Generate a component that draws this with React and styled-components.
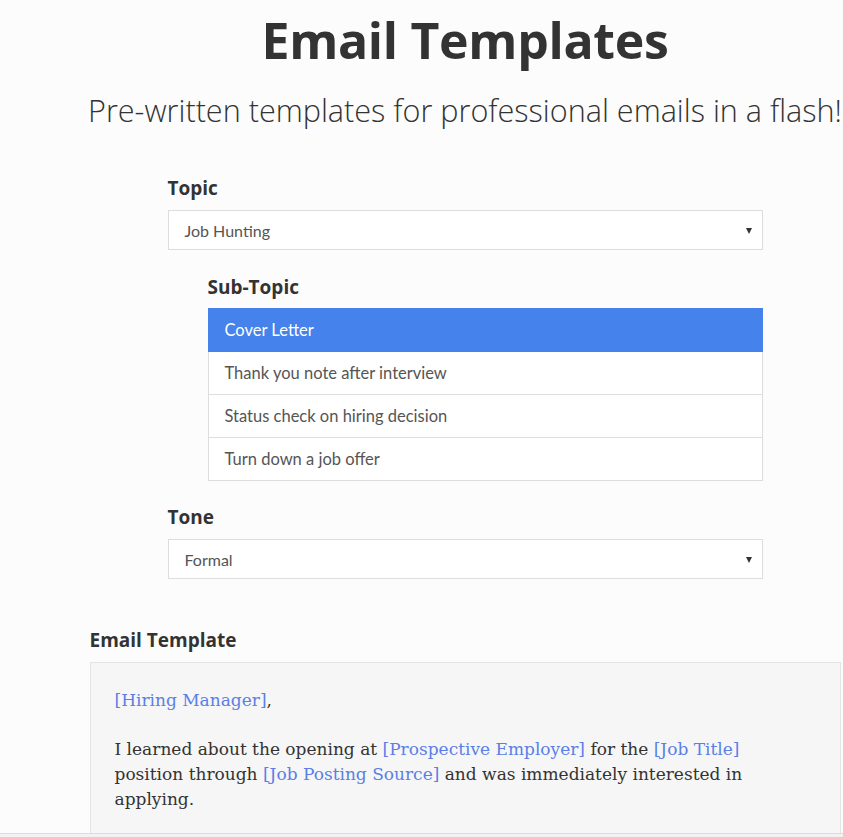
import styled, { createGlobalStyle } from "styled-components"

const GlobalStyle = createGlobalStyle`
    body {
        margin: 0;
        background: #fcfcfc;
        color: #333;
        font-family: Lato, "Open Sans", sans-serif;
        overflow: hidden;
    }
`

const subTopics = [
    "Cover Letter",
    "Thank you note after interview",
    "Status check on hiring decision",
    "Turn down a job offer",
]

const App = () => {
    return (
        <>
            <GlobalStyle />
            <Page>
                <Header>
                    <Title>Email Templates</Title>
                    <Subtitle>Pre-written templates for professional emails in a flash!</Subtitle>
                </Header>

                <Form>
                    <Field>
                        <Label>Topic</Label>
                        <Select>
                            Job Hunting
                            <Caret />
                        </Select>
                    </Field>

                    <SubField>
                        <Label>Sub-Topic</Label>
                        <List>
                            {subTopics.map((item, i) => (
                                <ListItem key={item} $active={i === 0}>{item}</ListItem>
                            ))}
                        </List>
                    </SubField>

                    <Field $gap={24}>
                        <Label>Tone</Label>
                        <Select>
                            Formal
                            <Caret />
                        </Select>
                    </Field>
                </Form>

                <TemplateSection>
                    <Label>Email Template</Label>
                    <TemplateBox>
                        <Para>
                            <Placeholder>[Hiring Manager]</Placeholder>,
                        </Para>
                        <Para>
                            I learned about the opening at <Placeholder>[Prospective Employer]</Placeholder> for
                            the <Placeholder>[Job Title]</Placeholder> position through{" "}
                            <Placeholder>[Job Posting Source]</Placeholder> and was immediately interested in
                            applying.
                        </Para>
                    </TemplateBox>
                </TemplateSection>
            </Page>
            <BottomBar />
        </>
    )
}

const Page = styled.div`
    width: 930px;
    display: flex;
    flex-direction: column;
    align-items: center;
`

const Header = styled.header`
    display: flex;
    flex-direction: column;
    align-items: center;
    padding-top: 10px;
`

const Title = styled.h1`
    margin: 0;
    font-family: "Open Sans", Lato, sans-serif;
    font-size: 50px;
    line-height: 60px;
    font-weight: 700;
    letter-spacing: -0.3px;
    color: #333;
`

const Subtitle = styled.p`
    margin: 20px 0 0;
    font-family: "Open Sans", Lato, sans-serif;
    font-size: 30.6px;
    line-height: 40px;
    font-weight: 300;
    color: #333;
    white-space: nowrap;
`

const Form = styled.div`
    width: 595px;
    display: flex;
    flex-direction: column;
    margin-top: 46px;
`

const Field = styled.div`
    display: flex;
    flex-direction: column;
    margin-top: ${(props) => props.$gap || 0}px;
`

const SubField = styled.div`
    display: flex;
    flex-direction: column;
    margin: 25px 0 0 40px;
`

const Label = styled.div`
    font-family: "Open Sans", Lato, sans-serif;
    font-size: 19px;
    line-height: 24px;
    font-weight: 700;
    color: #333;
    margin-bottom: 10px;
`

const Select = styled.div`
    position: relative;
    height: 40px;
    box-sizing: border-box;
    border: 1px solid #ddd;
    background: #fff;
    display: flex;
    align-items: center;
    padding-left: 16px;
    font-size: 16px;
    color: #555;
`

const Caret = styled.span`
    position: absolute;
    right: 10px;
    top: 17px;
    width: 0;
    height: 0;
    border-left: 3.5px solid transparent;
    border-right: 3.5px solid transparent;
    border-top: 6px solid #333;
`

const List = styled.div`
    display: flex;
    flex-direction: column;
`

const ListItem = styled.div`
    height: 44px;
    box-sizing: border-box;
    margin-top: -1px;
    display: flex;
    align-items: center;
    padding-left: 16px;
    font-size: 16.5px;
    border: 1px solid ${(props) => (props.$active ? "#4582ec" : "#ddd")};
    background: ${(props) => (props.$active ? "#4582ec" : "#fff")};
    color: ${(props) => (props.$active ? "#fff" : "#555")};
    position: relative;
    z-index: ${(props) => (props.$active ? 1 : 0)};
`

const TemplateSection = styled.section`
    width: 751px;
    display: flex;
    flex-direction: column;
    margin-top: 49px;
`

const TemplateBox = styled.div`
    border: 1px solid #e3e3e3;
    background: #f6f6f6;
    padding: 25px 24px 24px;
    font-family: "DejaVu Serif", "Liberation Serif", serif;
    font-size: 17px;
    line-height: 25px;
    color: #333;
`

const Para = styled.p`
    margin: 0 0 24px;
    max-width: 660px;
`

const Placeholder = styled.span`
    color: #5a7fe6;
`

const BottomBar = styled.div`
    position: fixed;
    left: 0;
    right: 0;
    bottom: 0;
    height: 3px;
    border-top: 1px solid #dcdcdc;
    background: #f2f2f2;
`

export default App
